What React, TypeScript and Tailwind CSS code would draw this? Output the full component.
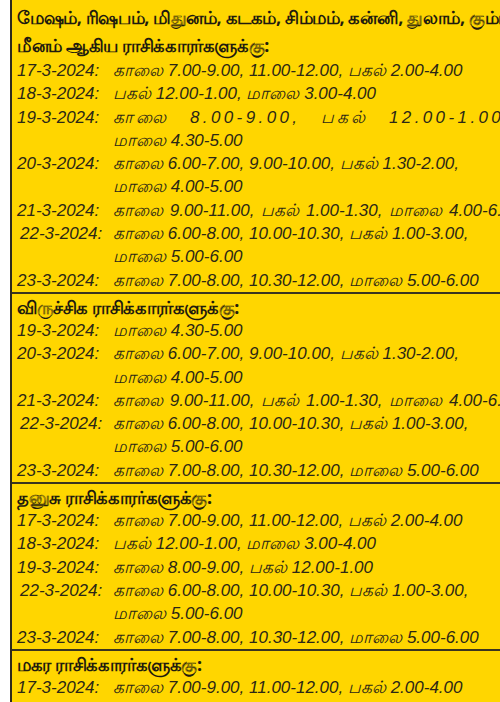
type Row = { date: string; lines: string[]; indent?: boolean; spread?: boolean; wide?: boolean };
type Section = { header: string[]; rows: Row[] };

const sections: Section[] = [
  {
    header: [
      "மேஷம், ரிஷபம், மிதுனம், கடகம், சிம்மம், கன்னி, துலாம், கும்பம்,",
      "மீனம் ஆகிய ராசிக்காரர்களுக்கு:",
    ],
    rows: [
      { date: "17-3-2024:", lines: ["காலை 7.00-9.00, 11.00-12.00, பகல் 2.00-4.00"] },
      { date: "18-3-2024:", lines: ["பகல் 12.00-1.00, மாலை 3.00-4.00"] },
      { date: "19-3-2024:", lines: ["காலை 8.00-9.00, பகல் 12.00-1.00,", "மாலை 4.30-5.00"], spread: true },
      { date: "20-3-2024:", lines: ["காலை 6.00-7.00, 9.00-10.00, பகல் 1.30-2.00,", "மாலை 4.00-5.00"] },
      { date: "21-3-2024:", lines: ["காலை 9.00-11.00, பகல் 1.00-1.30, மாலை 4.00-6.00"], wide: true },
      { date: "22-3-2024:", lines: ["காலை 6.00-8.00, 10.00-10.30, பகல் 1.00-3.00,", "மாலை 5.00-6.00"], indent: true },
      { date: "23-3-2024:", lines: ["காலை 7.00-8.00, 10.30-12.00, மாலை 5.00-6.00"] },
    ],
  },
  {
    header: ["விருச்சிக ராசிக்காரர்களுக்கு:"],
    rows: [
      { date: "19-3-2024:", lines: ["மாலை 4.30-5.00"] },
      { date: "20-3-2024:", lines: ["காலை 6.00-7.00, 9.00-10.00, பகல் 1.30-2.00,", "மாலை 4.00-5.00"] },
      { date: "21-3-2024:", lines: ["காலை 9.00-11.00, பகல் 1.00-1.30, மாலை 4.00-6.00"], wide: true },
      { date: "22-3-2024:", lines: ["காலை 6.00-8.00, 10.00-10.30, பகல் 1.00-3.00,", "மாலை 5.00-6.00"], indent: true },
      { date: "23-3-2024:", lines: ["காலை 7.00-8.00, 10.30-12.00, மாலை 5.00-6.00"] },
    ],
  },
  {
    header: ["தனுசு ராசிக்காரர்களுக்கு:"],
    rows: [
      { date: "17-3-2024:", lines: ["காலை 7.00-9.00, 11.00-12.00, பகல் 2.00-4.00"] },
      { date: "18-3-2024:", lines: ["பகல் 12.00-1.00, மாலை 3.00-4.00"] },
      { date: "19-3-2024:", lines: ["காலை 8.00-9.00, பகல் 12.00-1.00"] },
      { date: "22-3-2024:", lines: ["காலை 6.00-8.00, 10.00-10.30, பகல் 1.00-3.00,", "மாலை 5.00-6.00"], indent: true },
      { date: "23-3-2024:", lines: ["காலை 7.00-8.00, 10.30-12.00, மாலை 5.00-6.00"] },
    ],
  },
  {
    header: ["மகர ராசிக்காரர்களுக்கு:"],
    rows: [
      { date: "17-3-2024:", lines: ["காலை 7.00-9.00, 11.00-12.00, பகல் 2.00-4.00"] },
    ],
  },
];

const bodyFont = "[font-family:'Liberation_Sans_Narrow','Liberation_Sans','Noto_Sans',sans-serif]";

function TimeRow({ row }: { row: Row }) {
  return (
    <div className="flex">
      <div className={`w-[101px] shrink-0 italic ${row.indent ? "pl-[8px]" : "pl-[5px]"}`}>{row.date}</div>
      <div className="flex flex-col">
        {row.lines.map((line, i) => {
          let extra = "";
          if (row.spread && i === 0) extra = "tracking-[0.2em] [word-spacing:12px]";
          else if (row.wide) extra = "[word-spacing:2px]";
          return (
            <div key={i} className={`whitespace-pre italic ${extra}`}>
              {line}
            </div>
          );
        })}
      </div>
    </div>
  );
}

export default function App() {
  return (
    <div className="w-[500px] h-[702px] overflow-hidden bg-white pl-[10px]">
      <div className={`h-full border-l-2 border-[#2e2a1c] bg-[#ffd600] text-[#2b2716] ${bodyFont}`}>
        {sections.map((s, si) => (
          <div key={si} className={si > 0 ? "border-t-2 border-[#3a3420]" : ""}>
            <div className={`pl-[5px] ${si === 0 ? "pt-[3px]" : "pt-[1px]"}`}>
              {s.header.map((h, i) => (
                <div
                  key={i}
                  className={`whitespace-nowrap font-bold text-[18px] tracking-[-0.4px] text-[#1f1b0e] [font-family:'Noto_Sans','Liberation_Sans',sans-serif] ${si === 0 ? "leading-[28px]" : "leading-[24px]"}`}
                >
                  {h}
                </div>
              ))}
            </div>
            <div className="text-[17px] leading-[23.3px]">
              {s.rows.map((r, ri) => (
                <TimeRow key={ri} row={r} />
              ))}
            </div>
          </div>
        ))}
      </div>
    </div>
  );
}
